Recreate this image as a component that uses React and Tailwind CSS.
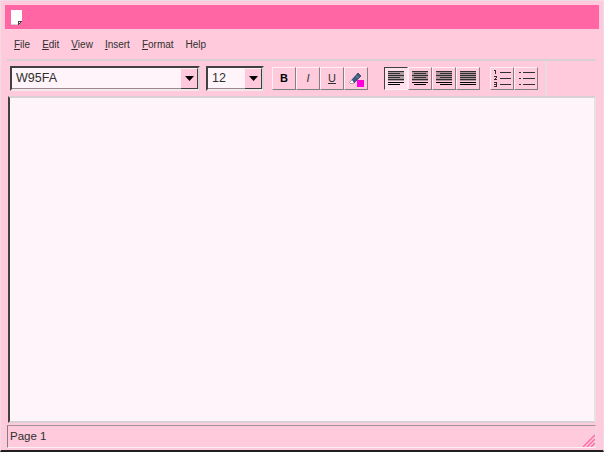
const F = { fontFamily: '"Liberation Sans", Arial, sans-serif' };

function Menu({ u, rest }) {
  return <span><span className="underline underline-offset-1">{u}</span>{rest}</span>;
}

function Combo({ text, w, boxW }) {
  return (
    <div className={`${w} h-[25px] flex items-center bg-[#fff4f9] border-2 border-t-[#404040] border-l-[#404040] border-r-[#d8d8d8] border-b-[#f4e8ee] shadow-[inset_-1px_-1px_0_#9a8a90]`}>
      <span className="flex-1 pl-1 text-[12.500px] text-[#303030]">{text}</span>
      <div className={`${boxW} h-[21px] flex items-center justify-center bg-[#ffc8dc] border border-t-[#fff0f6] border-l-[#fff0f6] border-r-[#404040] border-b-[#404040]`}>
        <svg width="9" height="5" viewBox="0 0 9 5"><path d="M0 0h9L4.500 5z" fill="#000" /></svg>
      </div>
    </div>
  );
}

function Btn({ children, pressed, w = "w-6" }) {
  const cls = pressed
    ? "border-t-[#404040] border-l-[#404040] border-r-[#fff0f6] border-b-[#fff0f6] bg-[#ffe0ec]"
    : "border-t-[#fff0f6] border-l-[#fff0f6] border-r-[#808080] border-b-[#808080]";
  return <div className={`${w} h-[23px] flex items-center justify-center border ${cls}`}>{children}</div>;
}

function Align({ rows }) {
  return (
    <svg width="18" height="15" viewBox="0 0 18 15" shapeRendering="crispEdges">
      <rect x="1" y="0" width="16" height="10" fill="#7a6a70" opacity="0.6" />
      {rows.map(([x, w], i) => (
        <rect key={i} x={x} y={i * 2 + (i > 4 ? 1 : 0)} width={w} height="1" fill={i > 4 ? "#000" : "#303030"} />
      ))}
    </svg>
  );
}

const left = [[1,16],[1,12],[1,16],[1,12],[1,16],[1,16],[1,12]];
const center = [[1,16],[3,12],[1,16],[3,12],[1,16],[1,16],[3,12]];
const right = [[1,16],[5,12],[1,16],[5,12],[1,16],[1,16],[5,12]];
const just = [[1,16],[1,16],[1,16],[1,16],[1,16],[1,16],[1,16]];

function NumList() {
  return (
    <svg width="19" height="19" viewBox="0 0 19 19" shapeRendering="crispEdges">
      <g fill="#303030">
        <rect x="1" y="1" width="2" height="1"/><rect x="2" y="2" width="1" height="3"/>
        <rect x="1" y="7" width="3" height="1"/><rect x="3" y="8" width="1" height="1"/><rect x="2" y="9" width="1" height="1"/><rect x="1" y="10" width="3" height="1"/>
        <rect x="1" y="13" width="3" height="1"/><rect x="3" y="14" width="1" height="3"/><rect x="1" y="15" width="2" height="1"/><rect x="1" y="17" width="3" height="1"/>
        <rect x="7" y="3" width="11" height="1"/><rect x="7" y="9" width="11" height="1"/><rect x="7" y="15" width="11" height="1"/>
      </g>
    </svg>
  );
}
function BulList() {
  return (
    <svg width="19" height="19" viewBox="0 0 19 19" shapeRendering="crispEdges">
      <g fill="#303030">
        <rect x="2" y="3" width="2" height="1"/><rect x="2" y="9" width="2" height="1"/><rect x="2" y="15" width="2" height="1"/>
        <rect x="6" y="3" width="12" height="1"/><rect x="6" y="9" width="12" height="1"/><rect x="6" y="15" width="12" height="1"/>
      </g>
    </svg>
  );
}

export default function App() {
  return (
    <div style={F} className="w-[604px] h-[452px] overflow-hidden flex flex-col bg-[#ffcadb] border-t border-l border-r border-[#f0dce4] border-b-2 border-b-[#202020] pt-1 px-1 pb-[2px] text-[#303030]">
      <div className="h-6 shrink-0 bg-[#ff66a3] flex items-center pl-[6px]">
        <svg width="11" height="15" viewBox="0 0 11 15" shapeRendering="crispEdges">
          <path d="M0 0h11v11l-4 4H0z" fill="#fff" />
          <path d="M7 15v-4h4z" fill="#404040" />
          <rect x="8" y="12" width="1" height="1" fill="#fff" />
          <rect x="0" y="14" width="7" height="1" fill="#d8d0d4" />
        </svg>
      </div>

      <div className="h-[30px] shrink-0 flex items-center gap-[12px] pl-[9px] text-[10px]">
        <Menu u="F" rest="ile" />
        <Menu u="E" rest="dit" />
        <Menu u="V" rest="iew" />
        <Menu u="I" rest="nsert" />
        <Menu u="F" rest="ormat" />
        <span>Help</span>
      </div>

      <div className="h-[37px] shrink-0 flex border-t-2 border-t-[#d8d0d4] ml-[2px] mr-[3px]">
        <div className="w-[540px] flex items-start pt-[5px] pl-[3px] border-r-2 border-r-[#e4dce0]">
          <Combo text="W95FA" w="w-[190px]" boxW="w-[18px]" />
          <div className="w-[6px]" />
          <Combo text="12" w="w-[58px]" boxW="w-[18px]" />
          <div className="w-2" />
          <div className="flex mt-[1px]">
            <Btn><span className="font-bold text-[11px] text-black">B</span></Btn>
            <Btn><span className="italic text-[11px]">I</span></Btn>
            <Btn><span className="underline text-[11px]">U</span></Btn>
            <Btn>
              <svg width="17" height="17" viewBox="0 0 17 17">
                <path d="M2 12 L10 3 L13 6 L6 13 L2 13z" fill="#3a5a90" stroke="#202020" strokeWidth="0.6" />
                <path d="M8 5.500 L10.500 8" stroke="#7fb08a" strokeWidth="1" fill="none" />
                <path d="M2 12l2-2 2 3H2z" fill="#fff" />
                <rect x="9" y="10" width="7" height="7" fill="#ff00dd" shapeRendering="crispEdges" />
              </svg>
            </Btn>
          </div>
          <div className="w-4" />
          <div className="flex mt-[1px]">
            <Btn pressed><Align rows={left} /></Btn>
            <Btn><Align rows={center} /></Btn>
            <Btn><Align rows={right} /></Btn>
            <Btn><Align rows={just} /></Btn>
          </div>
          <div className="w-[10px]" />
          <div className="flex mt-[1px]">
            <Btn><NumList /></Btn>
            <Btn><BulList /></Btn>
          </div>
        </div>
      </div>

      <div className="flex-1 mx-[3px] bg-[#fff4f9] border-2 border-t-[#d8d0d4] border-l-[#404040] border-r-[#e8e0e4] border-b-[#d8d0d4]" />

      <div className="h-[25px] shrink-0 pt-[2px] ml-[2px] mr-[3px]">
        <div className="h-full flex items-stretch border border-t-[#a09498] border-l-[#808080] border-r-[#e4dce0] border-b-[#fff0f6]">
          <div className="flex-1 flex items-center pl-[2px] text-[11.500px]">Page 1</div>
          <div className="w-[16px] flex items-end justify-end">
            <svg width="13" height="13" viewBox="0 0 13 13">
              <path d="M1 13L13 1M5 13L13 5M9 13L13 9" stroke="#ff66a3" strokeWidth="1.4" fill="none" />
            </svg>
          </div>
        </div>
      </div>
    </div>
  );
}
